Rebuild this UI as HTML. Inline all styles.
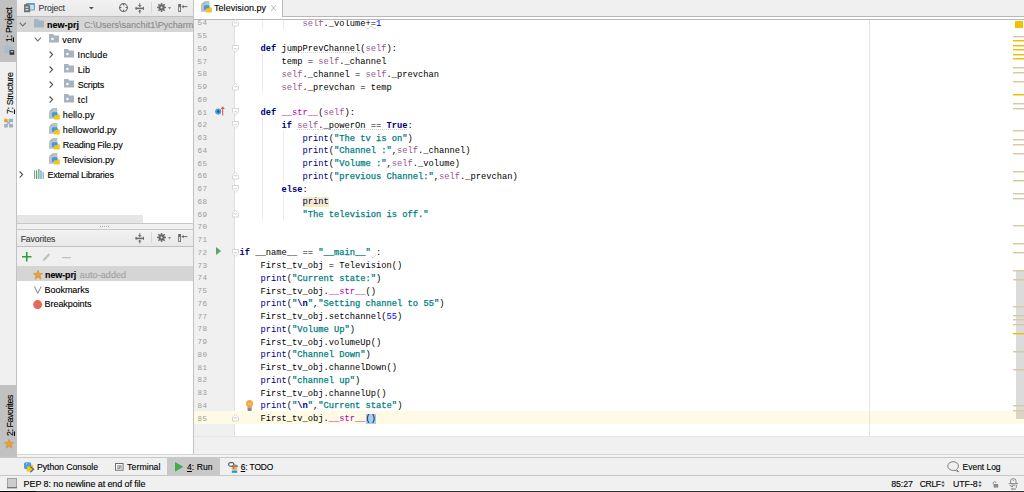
<!DOCTYPE html>
<html><head><meta charset="utf-8">
<style>
*{margin:0;padding:0;box-sizing:border-box}
html,body{width:1024px;height:492px;overflow:hidden;background:#f0f0f0}
body{position:relative;font-family:"Liberation Sans",sans-serif;color:#000}
.a{position:absolute}
.ico{position:absolute;line-height:0}
.ico svg{display:block}
.t2{position:absolute;white-space:pre;color:#000;-webkit-text-stroke:0.12px currentColor}
.ln{position:absolute;left:239.5px;height:13px;line-height:13px;white-space:pre;font-family:"Liberation Mono",monospace;font-size:8.75px;color:#000}
.num{position:absolute;left:197.4px;height:13px;line-height:13px;font-family:"Liberation Mono",monospace;font-size:7.6px;letter-spacing:0.55px;color:#9c9c9c}
.k{color:#000080;font-weight:bold}
.s{color:#94558d}
.t{color:#008080;font-weight:normal;-webkit-text-stroke:0.25px #008080}
.e{color:#000080;font-weight:bold}
.n{color:#0000ff}
.b{color:#000080}
.bw{color:#000080;background:#f6ebbc}
.m{color:#b200b2}
.bm{background:#a3cdf7}
.w{text-decoration:underline dotted #cfcfcf}
.sw{color:#94558d;text-decoration:underline dotted #cfcfcf}
.kw{color:#000080;font-weight:bold;text-decoration:underline dotted #cfcfcf}
.g{text-decoration:underline dotted #b9dcb9;text-underline-offset:0px}
.fold{position:absolute;left:231.5px}
.wv{text-decoration:underline wavy #cdcdcd;text-decoration-thickness:0.5px;text-underline-offset:-0.5px}
.stripe{position:absolute;left:1013px;width:11px;height:1px}
.guide{position:absolute;width:1px;background:#ececec}
u{text-decoration:underline;text-underline-offset:1px}
</style></head><body>
<!-- left tool strip -->
<div class="a" style="left:0;top:0;width:16px;height:457px;background:#f0f0f0"></div>
<div class="a" style="left:0;top:0;width:16px;height:62px;background:#c1c1c1"></div>
<div class="a" style="left:0;top:385px;width:16px;height:72px;background:#c1c1c1"></div>
<div class="a" style="left:16px;top:0;width:1px;height:457px;background:#c2c2c2"></div>
<div class="t2" style="left:2.35px;top:42.00px;font-size:8.8px;line-height:14px;transform-origin:0 0;transform:rotate(-90deg);letter-spacing:-0.276px;"><u>1</u>: Project</div>
<div class="ico" style="left:3.5px;top:45px"><svg width="11" height="10" viewBox="0 0 11 10"><path d="M0.5,0 H4 L4.8,1.4 H8.5 V8 H0.5Z" fill="#a9bccb"/><rect x="5.6" y="5.2" width="4.6" height="4.6" fill="#333"/><rect x="6.6" y="6.2" width="2.6" height="1.1" fill="#ddd"/></svg></div>
<div class="t2" style="left:2.75px;top:113.60px;font-size:8.8px;line-height:14px;transform-origin:0 0;transform:rotate(-90deg);letter-spacing:-0.336px;"><u>7</u>: Structure</div>
<div class="ico" style="left:4px;top:117.5px"><svg width="10" height="10" viewBox="0 0 10 10"><path d="M2,2.6 L7,7.6 M7,2.6 L2,7.6" stroke="#9fb0bf" stroke-width="1.2"/><rect x="4.6" y="0.8" width="4.4" height="3.4" fill="#9fb0bf"/><rect x="0.2" y="5.9" width="3.6" height="3.6" fill="#9fb0bf"/><rect x="5" y="5.9" width="4" height="3.6" fill="#9fb0bf"/><circle cx="1.9" cy="2.5" r="1.9" fill="#eea020"/></svg></div>
<div class="t2" style="left:2.55px;top:435.60px;font-size:8.8px;line-height:14px;transform-origin:0 0;transform:rotate(-90deg);letter-spacing:-0.408px;"><u>2</u>: Favorites</div>
<div class="ico" style="left:3.6px;top:439.3px"><svg width="10" height="10" viewBox="0 0 10 10"><path d="M5,0.2 L6.25,3.3 L9.7,3.5 L7.05,5.7 L7.9,9.2 L5,7.3 L2.1,9.2 L2.95,5.7 L0.3,3.5 L3.75,3.3Z" fill="#eba035" stroke="#d08a2a" stroke-width="0.5"/></svg></div>

<!-- project panel -->
<div class="a" style="left:17px;top:0;width:176px;height:454px;background:#fff"></div>
<div class="a" style="left:17px;top:0;width:176px;height:16px;background:linear-gradient(#f2f2f2,#e8e8e8)"></div>
<div class="a" style="left:17px;top:15.5px;width:176px;height:1px;background:#bfbfbf"></div>
<div class="a" style="left:193px;top:0;width:1px;height:454px;background:#c2c2c2"></div>
<div class="ico" style="left:24px;top:2.7px"><svg width="11" height="10" viewBox="0 0 11 10"><rect x="2.4" y="0.6" width="8" height="6.4" rx="0.4" fill="#c9e3f7" stroke="#5b9fd6" stroke-width="1.1"/><rect x="2.4" y="0.3" width="8.3" height="1.5" fill="#5b9fd6"/><path d="M0,1.2 H4.5 L6.2,2.9 V9.2 H0Z" fill="#717171"/><rect x="1.4" y="3.6" width="3" height="1.1" fill="#e8e8e8"/><rect x="1.4" y="6.2" width="3" height="1.1" fill="#e8e8e8"/></svg></div>
<div class="t2" style="left:38.5px;top:0.92px;font-size:8.6px;line-height:14px;letter-spacing:-0.042px;color:#3c3c3c">Project</div>
<div class="ico" style="left:88.8px;top:7px"><svg width="5" height="3" viewBox="0 0 5 3"><path d="M0,0 H4.7 L2.35,2.4Z" fill="#505050"/></svg></div>
<div class="ico" style="left:119px;top:3px"><svg width="10" height="10" viewBox="0 0 10 10"><circle cx="4.5" cy="4.55" r="3.9" fill="none" stroke="#6b6b6b" stroke-width="1.1"/><path d="M4.5,0.6 V2.4 M4.5,6.7 V8.5 M0.6,4.55 H2.4 M6.6,4.55 H8.4" stroke="#6b6b6b" stroke-width="1.1"/></svg></div>
<div class="ico" style="left:135px;top:2.5px"><svg width="10" height="11" viewBox="0 0 10 11"><g fill="#6b6b6b"><rect x="0.6" y="4.6" width="8.4" height="1.6"/><rect x="0.6" y="3.8" width="1" height="3"/><rect x="8" y="3.8" width="1" height="3"/><rect x="4.3" y="0.1" width="1" height="3.6"/><path d="M2.8,2.2 H6.8 L4.8,3.9Z"/><rect x="4.3" y="7" width="1" height="3.4"/><path d="M2.8,8.6 H6.8 L4.8,6.9Z"/></g></svg></div>
<div class="a" style="left:151px;top:2px;width:1px;height:11px;background:#d9d9d9"></div>
<div class="ico" style="left:157.2px;top:3px"><svg width="10" height="10" viewBox="0 0 10 10"><g fill="#6b6b6b"><circle cx="4.55" cy="4.45" r="3.1"/><rect x="3.85" y="-0.05" width="1.4" height="9" transform="rotate(0 4.55 4.45)"/><rect x="3.85" y="-0.05" width="1.4" height="9" transform="rotate(45 4.55 4.45)"/><rect x="3.85" y="-0.05" width="1.4" height="9" transform="rotate(90 4.55 4.45)"/><rect x="3.85" y="-0.05" width="1.4" height="9" transform="rotate(135 4.55 4.45)"/></g><circle cx="4.55" cy="4.45" r="1.0" fill="#ececec"/></svg></div>
<div class="ico" style="left:168.3px;top:6.8px"><svg width="4" height="3" viewBox="0 0 4 3"><path d="M0,0.3 H3.1 L1.55,2 Z" fill="#6b6b6b"/></svg></div>
<div class="ico" style="left:178px;top:3.9px"><svg width="10" height="9" viewBox="0 0 10 9"><g fill="#6b6b6b"><rect x="0.2" y="0" width="2.8" height="8"/></g><rect x="1.05" y="3.1" width="1.1" height="4.1" fill="#ececec"/><path d="M3.8,2.6 H9.4" stroke="#6b6b6b" stroke-width="1"/><path d="M3.6,2.6 L5.6,0.8 V4.4Z" fill="#6b6b6b"/></svg></div>

<div class="a" style="left:17px;top:16.5px;width:176px;height:15px;background:#d5d5d5"></div>
<div class="ico" style="left:18.6px;top:22.0px"><svg width="8" height="5" viewBox="0 0 8 5"><path d="M0.7,0.7 L3.8,3.9 L6.9,0.7" fill="none" stroke="#707070" stroke-width="1.05"/></svg></div><div class="ico" style="left:34px;top:19.2px"><svg width="10" height="9" viewBox="0 0 10 9"><path d="M0,0 H4.3 L5,1.6 H10 V8.5 H0 Z" fill="#a7b4bf"/></svg></div><div class="t2" style="left:47.1px;top:17.58px;font-size:9px;line-height:14px;"><b>new-prj</b><span style="color:#8a8a8a">  C:\Users\sanchit1\PycharmProjects</span></div><div class="ico" style="left:33.6px;top:37.0px"><svg width="8" height="5" viewBox="0 0 8 5"><path d="M0.7,0.7 L3.8,3.9 L6.9,0.7" fill="none" stroke="#707070" stroke-width="1.05"/></svg></div><div class="ico" style="left:48.9px;top:34.3px"><svg width="10" height="9" viewBox="0 0 10 9"><path d="M0,0 H4.3 L5,1.6 H10 V8.5 H0 Z" fill="#a7b4bf"/><circle cx="3.4" cy="5.0" r="1.35" fill="#f4f6f8"/></svg></div><div class="t2" style="left:62.3px;top:32.58px;font-size:9px;line-height:14px;letter-spacing:0.128px;">venv</div><div class="ico" style="left:49.2px;top:50.9px"><svg width="5" height="8" viewBox="0 0 5 8"><path d="M0.6,0.5 L3.6,3.6 L0.6,6.7" fill="none" stroke="#555" stroke-width="1.15"/></svg></div><div class="ico" style="left:64px;top:49.3px"><svg width="10" height="9" viewBox="0 0 10 9"><path d="M0,0 H4.3 L5,1.6 H10 V8.5 H0 Z" fill="#a7b4bf"/><circle cx="3.4" cy="5.0" r="1.35" fill="#f4f6f8"/></svg></div><div class="t2" style="left:77.6px;top:47.58px;font-size:9px;line-height:14px;letter-spacing:0.128px;">Include</div><div class="ico" style="left:49.2px;top:65.9px"><svg width="5" height="8" viewBox="0 0 5 8"><path d="M0.6,0.5 L3.6,3.6 L0.6,6.7" fill="none" stroke="#555" stroke-width="1.15"/></svg></div><div class="ico" style="left:64px;top:64.3px"><svg width="10" height="9" viewBox="0 0 10 9"><path d="M0,0 H4.3 L5,1.6 H10 V8.5 H0 Z" fill="#a7b4bf"/><circle cx="3.4" cy="5.0" r="1.35" fill="#f4f6f8"/></svg></div><div class="t2" style="left:77.7px;top:62.58px;font-size:9px;line-height:14px;letter-spacing:0.142px;">Lib</div><div class="ico" style="left:49.2px;top:80.9px"><svg width="5" height="8" viewBox="0 0 5 8"><path d="M0.6,0.5 L3.6,3.6 L0.6,6.7" fill="none" stroke="#555" stroke-width="1.15"/></svg></div><div class="ico" style="left:64px;top:79.3px"><svg width="10" height="9" viewBox="0 0 10 9"><path d="M0,0 H4.3 L5,1.6 H10 V8.5 H0 Z" fill="#a7b4bf"/><circle cx="3.4" cy="5.0" r="1.35" fill="#f4f6f8"/></svg></div><div class="t2" style="left:77.7px;top:77.58px;font-size:9px;line-height:14px;letter-spacing:-0.169px;">Scripts</div><div class="ico" style="left:49.2px;top:95.9px"><svg width="5" height="8" viewBox="0 0 5 8"><path d="M0.6,0.5 L3.6,3.6 L0.6,6.7" fill="none" stroke="#555" stroke-width="1.15"/></svg></div><div class="ico" style="left:64px;top:94.3px"><svg width="10" height="9" viewBox="0 0 10 9"><path d="M0,0 H4.3 L5,1.6 H10 V8.5 H0 Z" fill="#a7b4bf"/><circle cx="3.4" cy="5.0" r="1.35" fill="#f4f6f8"/></svg></div><div class="t2" style="left:77.7px;top:92.58px;font-size:9px;line-height:14px;letter-spacing:0.450px;">tcl</div><div class="ico" style="left:49.2px;top:108.0px"><svg width="12" height="12" viewBox="0 0 12 12"><path d="M3.8,0 H8.4 V10.8 H0 V3.8 Z" fill="#b9c1c9"/><path d="M0.6,3.1 L3.1,0.6 V3.1 Z" fill="#a5afb8"/><path d="M4.1,4.3 H7.4 Q8.6,4.3 8.6,5.5 V7.5 H6 Q4.9,7.5 4.9,8.6 V8.9 H4.1 Q2.9,8.9 2.9,7.7 V5.5 Q2.9,4.3 4.1,4.3 Z" fill="#3f9ad8"/><path d="M6,7.5 H8.6 V6.3 H9.6 Q10.8,6.3 10.8,7.5 V10.4 Q10.8,11.6 9.6,11.6 H6 Q4.8,11.6 4.8,10.4 V8.7 Q4.8,7.5 6,7.5 Z" fill="#f6c416"/></svg></div><div class="t2" style="left:62.8px;top:107.58px;font-size:9px;line-height:14px;letter-spacing:0.081px;">hello.py</div><div class="ico" style="left:49.2px;top:123.0px"><svg width="12" height="12" viewBox="0 0 12 12"><path d="M3.8,0 H8.4 V10.8 H0 V3.8 Z" fill="#b9c1c9"/><path d="M0.6,3.1 L3.1,0.6 V3.1 Z" fill="#a5afb8"/><path d="M4.1,4.3 H7.4 Q8.6,4.3 8.6,5.5 V7.5 H6 Q4.9,7.5 4.9,8.6 V8.9 H4.1 Q2.9,8.9 2.9,7.7 V5.5 Q2.9,4.3 4.1,4.3 Z" fill="#3f9ad8"/><path d="M6,7.5 H8.6 V6.3 H9.6 Q10.8,6.3 10.8,7.5 V10.4 Q10.8,11.6 9.6,11.6 H6 Q4.8,11.6 4.8,10.4 V8.7 Q4.8,7.5 6,7.5 Z" fill="#f6c416"/></svg></div><div class="t2" style="left:62.8px;top:122.58px;font-size:9px;line-height:14px;letter-spacing:0.106px;">helloworld.py</div><div class="ico" style="left:49.2px;top:138.0px"><svg width="12" height="12" viewBox="0 0 12 12"><path d="M3.8,0 H8.4 V10.8 H0 V3.8 Z" fill="#b9c1c9"/><path d="M0.6,3.1 L3.1,0.6 V3.1 Z" fill="#a5afb8"/><path d="M4.1,4.3 H7.4 Q8.6,4.3 8.6,5.5 V7.5 H6 Q4.9,7.5 4.9,8.6 V8.9 H4.1 Q2.9,8.9 2.9,7.7 V5.5 Q2.9,4.3 4.1,4.3 Z" fill="#3f9ad8"/><path d="M6,7.5 H8.6 V6.3 H9.6 Q10.8,6.3 10.8,7.5 V10.4 Q10.8,11.6 9.6,11.6 H6 Q4.8,11.6 4.8,10.4 V8.7 Q4.8,7.5 6,7.5 Z" fill="#f6c416"/></svg></div><div class="t2" style="left:62.8px;top:137.58px;font-size:9px;line-height:14px;letter-spacing:-0.189px;">Reading File.py</div><div class="ico" style="left:49.2px;top:153.0px"><svg width="12" height="12" viewBox="0 0 12 12"><path d="M3.8,0 H8.4 V10.8 H0 V3.8 Z" fill="#b9c1c9"/><path d="M0.6,3.1 L3.1,0.6 V3.1 Z" fill="#a5afb8"/><path d="M4.1,4.3 H7.4 Q8.6,4.3 8.6,5.5 V7.5 H6 Q4.9,7.5 4.9,8.6 V8.9 H4.1 Q2.9,8.9 2.9,7.7 V5.5 Q2.9,4.3 4.1,4.3 Z" fill="#3f9ad8"/><path d="M6,7.5 H8.6 V6.3 H9.6 Q10.8,6.3 10.8,7.5 V10.4 Q10.8,11.6 9.6,11.6 H6 Q4.8,11.6 4.8,10.4 V8.7 Q4.8,7.5 6,7.5 Z" fill="#f6c416"/></svg></div><div class="t2" style="left:62.8px;top:152.58px;font-size:9px;line-height:14px;letter-spacing:0.014px;">Television.py</div><div class="ico" style="left:19.4px;top:170.9px"><svg width="5" height="8" viewBox="0 0 5 8"><path d="M0.6,0.5 L3.6,3.6 L0.6,6.7" fill="none" stroke="#555" stroke-width="1.15"/></svg></div><div class="ico" style="left:34.2px;top:168.6px"><svg width="11" height="11" viewBox="0 0 11 11"><rect x="0" y="1.4" width="1.1" height="8.5" fill="#8596a6"/><rect x="2" y="1.4" width="1.2" height="8.6" fill="#4caf3c"/><rect x="4" y="0" width="1.6" height="9.9" fill="#97a3ad"/><rect x="6.4" y="1.4" width="1.2" height="8.6" fill="#35a9e0"/><rect x="8.6" y="3.2" width="1.1" height="6.7" fill="#8596a6"/></svg></div><div class="t2" style="left:47.5px;top:167.58px;font-size:9px;line-height:14px;letter-spacing:-0.214px;">External Libraries</div>

<div class="a" style="left:17px;top:215px;width:126px;height:8px;background:#e5e5e5"></div>
<div class="a" style="left:17px;top:223px;width:176px;height:1px;background:#c8c8c8"></div>
<div class="a" style="left:17px;top:224px;width:176px;height:5px;background:#f0f0f0"></div>
<div class="a" style="left:100px;top:225.5px;width:10px;height:1.5px;background:repeating-linear-gradient(90deg,#aaa 0 1px,transparent 1px 2px)"></div>
<div class="a" style="left:17px;top:229px;width:176px;height:1px;background:#c8c8c8"></div>
<div class="a" style="left:17px;top:230px;width:176px;height:16px;background:linear-gradient(#f2f2f2,#e8e8e8)"></div>
<div class="a" style="left:17px;top:246px;width:176px;height:1px;background:#bfbfbf"></div>
<div class="t2" style="left:20.7px;top:231.62px;font-size:8.6px;line-height:14px;letter-spacing:-0.080px;color:#3c3c3c">Favorites</div>
<div class="ico" style="left:135px;top:232.7px"><svg width="10" height="11" viewBox="0 0 10 11"><g fill="#6b6b6b"><rect x="0.6" y="4.6" width="8.4" height="1.6"/><rect x="0.6" y="3.8" width="1" height="3"/><rect x="8" y="3.8" width="1" height="3"/><rect x="4.3" y="0.1" width="1" height="3.6"/><path d="M2.8,2.2 H6.8 L4.8,3.9Z"/><rect x="4.3" y="7" width="1" height="3.4"/><path d="M2.8,8.6 H6.8 L4.8,6.9Z"/></g></svg></div>
<div class="a" style="left:151px;top:232px;width:1px;height:11px;background:#d9d9d9"></div>
<div class="ico" style="left:157.2px;top:233px"><svg width="10" height="10" viewBox="0 0 10 10"><g fill="#6b6b6b"><circle cx="4.55" cy="4.45" r="3.1"/><rect x="3.85" y="-0.05" width="1.4" height="9" transform="rotate(0 4.55 4.45)"/><rect x="3.85" y="-0.05" width="1.4" height="9" transform="rotate(45 4.55 4.45)"/><rect x="3.85" y="-0.05" width="1.4" height="9" transform="rotate(90 4.55 4.45)"/><rect x="3.85" y="-0.05" width="1.4" height="9" transform="rotate(135 4.55 4.45)"/></g><circle cx="4.55" cy="4.45" r="1.0" fill="#ececec"/></svg></div>
<div class="ico" style="left:168.3px;top:236.8px"><svg width="4" height="3" viewBox="0 0 4 3"><path d="M0,0.3 H3.1 L1.55,2 Z" fill="#6b6b6b"/></svg></div>
<div class="ico" style="left:178px;top:233.9px"><svg width="10" height="9" viewBox="0 0 10 9"><g fill="#6b6b6b"><rect x="0.2" y="0" width="2.8" height="8"/></g><rect x="1.05" y="3.1" width="1.1" height="4.1" fill="#ececec"/><path d="M3.8,2.6 H9.4" stroke="#6b6b6b" stroke-width="1"/><path d="M3.6,2.6 L5.6,0.8 V4.4Z" fill="#6b6b6b"/></svg></div>
<div class="a" style="left:17px;top:247px;width:176px;height:19px;background:#f0f0f0"></div>
<div class="ico" style="left:21.6px;top:252px"><svg width="10" height="10" viewBox="0 0 10 10"><path d="M4.75,0 V9.5 M0,4.75 H9.5" stroke="#2f9e3f" stroke-width="1.6"/></svg></div>
<div class="ico" style="left:41.5px;top:252px"><svg width="9" height="10" viewBox="0 0 9 10"><path d="M0.8,9.2 L1.6,6.6 L6.6,1.2 L8.2,2.8 L3.2,8.2Z" fill="#c2c2c2"/></svg></div>
<div class="ico" style="left:62px;top:257.2px"><svg width="9" height="2" viewBox="0 0 9 2"><rect x="0" y="0" width="9" height="1.3" fill="#c2c2c2"/></svg></div>
<div class="a" style="left:17px;top:266px;width:176px;height:15.3px;background:#d5d5d5"></div>
<div class="ico" style="left:33.2px;top:270.4px"><svg width="10" height="10" viewBox="0 0 10 10"><path d="M5,0.2 L6.25,3.3 L9.7,3.5 L7.05,5.7 L7.9,9.2 L5,7.3 L2.1,9.2 L2.95,5.7 L0.3,3.5 L3.75,3.3Z" fill="#eba035" stroke="#d08a2a" stroke-width="0.5"/></svg></div>
<div class="t2" style="left:45.1px;top:267.68px;font-size:9px;line-height:14px;font-weight:bold;letter-spacing:-0.136px;">new-prj</div><div class="t2" style="left:79.8px;top:267.68px;font-size:9px;line-height:14px;letter-spacing:0.084px;color:#a2a2a2">auto-added</div>
<div class="ico" style="left:34px;top:285.8px"><svg width="8" height="8" viewBox="0 0 8 8"><path d="M0.5,0.4 L3.8,7.2 L7.2,0.4" fill="none" stroke="#8a969e" stroke-width="1.05"/></svg></div>
<div class="t2" style="left:44.6px;top:282.58px;font-size:9px;line-height:14px;letter-spacing:-0.052px;">Bookmarks</div>
<div class="ico" style="left:32.8px;top:300px"><svg width="10" height="10" viewBox="0 0 10 10"><circle cx="4.65" cy="4.6" r="4.5" fill="#e6695d"/></svg></div>
<div class="t2" style="left:44.6px;top:297.18px;font-size:9px;line-height:14px;letter-spacing:-0.063px;">Breakpoints</div>
<div class="a" style="left:17px;top:454px;width:177px;height:3px;background:#f3f3f3"></div>
<div class="a" style="left:17px;top:454px;width:177px;height:1px;background:#d6d6d6"></div>

<!-- editor -->
<div class="a" style="left:194px;top:0;width:830px;height:20px;background:#fff"></div>
<div class="a" style="left:283px;top:0;width:741px;height:16px;background:#f0f0f0"></div>
<div class="a" style="left:282px;top:0;width:1px;height:17px;background:#b8b8b8"></div>
<div class="a" style="left:282px;top:16px;width:742px;height:1px;background:#b8b8b8"></div>
<div class="a" style="left:194px;top:19px;width:830px;height:1px;background:#b8b8b8"></div>
<div class="ico" style="left:201.1px;top:1.1px"><svg width="12" height="12" viewBox="0 0 12 12"><path d="M3.8,0 H8.4 V10.8 H0 V3.8 Z" fill="#b9c1c9"/><path d="M0.6,3.1 L3.1,0.6 V3.1 Z" fill="#a5afb8"/><path d="M4.1,4.3 H7.4 Q8.6,4.3 8.6,5.5 V7.5 H6 Q4.9,7.5 4.9,8.6 V8.9 H4.1 Q2.9,8.9 2.9,7.7 V5.5 Q2.9,4.3 4.1,4.3 Z" fill="#3f9ad8"/><path d="M6,7.5 H8.6 V6.3 H9.6 Q10.8,6.3 10.8,7.5 V10.4 Q10.8,11.6 9.6,11.6 H6 Q4.8,11.6 4.8,10.4 V8.7 Q4.8,7.5 6,7.5 Z" fill="#f6c416"/></svg></div>
<div class="t2" style="left:214px;top:0.78px;font-size:9px;line-height:14px;letter-spacing:0.047px;">Television.py</div>
<div class="ico" style="left:271px;top:5.2px"><svg width="5" height="6" viewBox="0 0 5 6"><path d="M0.3,0.3 L4.7,5.7 M4.7,0.3 L0.3,5.7" stroke="#b0b0b0" stroke-width="0.95"/></svg></div>

<div class="a" style="left:194px;top:20px;width:830px;height:416px;background:#fff"></div>
<div class="a" style="left:194px;top:20px;width:40px;height:416px;background:#f0f0f0"></div>
<div class="a" style="left:234px;top:20px;width:1px;height:416px;background:#e0e0e0"></div>
<div class="a" style="left:194px;top:411.15px;width:830px;height:12.75px;background:#fffae3"></div>
<div class="a" style="left:869px;top:20px;width:1px;height:416px;background:#e4e4e4"></div>
<div class="a" style="left:194px;top:20px;width:830px;height:416px;overflow:hidden">
<div style="position:absolute;left:-194px;top:-20px;width:1024px;height:492px">
<div class="guide" style="left:262.30px;top:54.15px;height:38.25px"></div><div class="guide" style="left:262.30px;top:117.90px;height:102.00px"></div><div class="guide" style="left:283.30px;top:130.65px;height:51.00px"></div><div class="guide" style="left:283.30px;top:194.40px;height:25.50px"></div><div class="guide" style="left:262.30px;top:20px;height:8.65px"></div><div class="guide" style="left:283.30px;top:20px;height:8.65px"></div>
<div class="num" style="top:17.37px">54</div><div class="num" style="top:30.12px">55</div><div class="num" style="top:42.87px">56</div><div class="num" style="top:55.62px">57</div><div class="num" style="top:68.37px">58</div><div class="num" style="top:81.12px">59</div><div class="num" style="top:93.87px">60</div><div class="num" style="top:106.62px">61</div><div class="num" style="top:119.37px">62</div><div class="num" style="top:132.12px">63</div><div class="num" style="top:144.87px">64</div><div class="num" style="top:157.62px">65</div><div class="num" style="top:170.37px">66</div><div class="num" style="top:183.12px">67</div><div class="num" style="top:195.87px">68</div><div class="num" style="top:208.62px">69</div><div class="num" style="top:221.37px">70</div><div class="num" style="top:234.12px">71</div><div class="num" style="top:246.87px">72</div><div class="num" style="top:259.62px">73</div><div class="num" style="top:272.37px">74</div><div class="num" style="top:285.12px">75</div><div class="num" style="top:297.87px">76</div><div class="num" style="top:310.62px">77</div><div class="num" style="top:323.37px">78</div><div class="num" style="top:336.12px">79</div><div class="num" style="top:348.87px">80</div><div class="num" style="top:361.62px">81</div><div class="num" style="top:374.37px">82</div><div class="num" style="top:387.12px">83</div><div class="num" style="top:399.87px">84</div><div class="num" style="top:412.62px">85</div>
<div class="ln" style="top:17.77px">            <span class="s">self</span>._volume<span class="wv">+=</span><span class="n">1</span></div><div class="ln" style="top:30.52px"></div><div class="ln" style="top:43.27px">    <span class="k">def</span> <span class="w">jumpPrevChannel</span>(<span class="s">self</span>):</div><div class="ln" style="top:56.02px">        temp = <span class="s">self</span>._channel</div><div class="ln" style="top:68.77px">        <span class="s">self</span>._channel = <span class="s">self</span>._prevchan</div><div class="ln" style="top:81.52px">        <span class="s">self</span>._<span class="g">prevchan</span> = temp</div><div class="ln" style="top:94.27px"></div><div class="ln" style="top:107.02px">    <span class="k">def</span> <span class="m">__str__</span>(<span class="s">self</span>):</div><div class="ln" style="top:119.77px">        <span class="k">if</span> <span class="sw">self</span><span class="w">._powerOn == </span><span class="kw">True</span>:</div><div class="ln" style="top:132.52px">            <span class="b">print</span>(<span class="t">&quot;The tv is on&quot;</span>)</div><div class="ln" style="top:145.27px">            <span class="b">print</span>(<span class="t">&quot;Channel :&quot;</span><span class="wv">,</span><span class="s">self</span>._channel)</div><div class="ln" style="top:158.02px">            <span class="b">print</span>(<span class="t">&quot;Volume :&quot;</span><span class="wv">,</span><span class="s">self</span>._volume)</div><div class="ln" style="top:170.77px">            <span class="b">print</span>(<span class="t">&quot;previous Channel:&quot;</span><span class="wv">,</span><span class="s">self</span>._prevchan)</div><div class="ln" style="top:183.52px">        <span class="k">else</span>:</div><div class="ln" style="top:196.27px">            <span class="bw">print</span></div><div class="ln" style="top:209.02px">            <span class="t">&quot;The television is off.&quot;</span></div><div class="ln" style="top:221.77px"></div><div class="ln" style="top:234.52px"></div><div class="ln" style="top:247.27px"><span class="k">if</span> __name__ == <span class="t">&quot;__main__&quot;</span><span class="wv"> </span>:</div><div class="ln" style="top:260.02px">    First_tv_obj = Television()</div><div class="ln" style="top:272.77px">    <span class="b">print</span>(<span class="t">&quot;Current state:&quot;</span>)</div><div class="ln" style="top:285.52px">    First_tv_obj.<span class="m">__str__</span>()</div><div class="ln" style="top:298.27px">    <span class="b">print</span>(<span class="t">&quot;</span><span class="e">\n</span><span class="t">&quot;</span><span class="wv">,</span><span class="t">&quot;Setting channel to 55&quot;</span>)</div><div class="ln" style="top:311.02px">    First_tv_obj.setchannel(<span class="n">55</span>)</div><div class="ln" style="top:323.77px">    <span class="b">print</span>(<span class="t">&quot;Volume Up&quot;</span>)</div><div class="ln" style="top:336.52px">    First_tv_obj.volumeUp()</div><div class="ln" style="top:349.27px">    <span class="b">print</span>(<span class="t">&quot;Channel Down&quot;</span>)</div><div class="ln" style="top:362.02px">    First_tv_obj.channelDown()</div><div class="ln" style="top:374.77px">    <span class="b">print</span>(<span class="t">&quot;channel up&quot;</span>)</div><div class="ln" style="top:387.52px">    First_tv_obj.channelUp()</div><div class="ln" style="top:400.27px">    <span class="b">print</span>(<span class="t">&quot;</span><span class="e">\n</span><span class="t">&quot;</span><span class="wv">,</span><span class="t">&quot;Current state&quot;</span>)</div><div class="ln" style="top:413.02px">    First_tv_obj.<span class="m">__str__</span><span class="bm">()</span></div>
</div></div>
<svg class="fold" style="top:19.00px" width="7" height="8" viewBox="0 0 7 8"><path d="M0.5,7 H6.5 V3.2 L3.5,0.3 L0.5,3.2 Z" fill="#fff" stroke="#cdcdcd" stroke-width="0.8"/><path d="M1.8,3.8 H5.2" stroke="#bdbdbd" stroke-width="0.8"/></svg><svg class="fold" style="top:44.70px" width="7" height="8" viewBox="0 0 7 8"><path d="M0.5,0.5 H6.5 V4.3 L3.5,7.2 L0.5,4.3 Z" fill="#fff" stroke="#cdcdcd" stroke-width="0.8"/><path d="M1.8,3.8 H5.2" stroke="#bdbdbd" stroke-width="0.8"/></svg><svg class="fold" style="top:82.75px" width="7" height="8" viewBox="0 0 7 8"><path d="M0.5,7 H6.5 V3.2 L3.5,0.3 L0.5,3.2 Z" fill="#fff" stroke="#cdcdcd" stroke-width="0.8"/><path d="M1.8,3.8 H5.2" stroke="#bdbdbd" stroke-width="0.8"/></svg><svg class="fold" style="top:108.45px" width="7" height="8" viewBox="0 0 7 8"><path d="M0.5,0.5 H6.5 V4.3 L3.5,7.2 L0.5,4.3 Z" fill="#fff" stroke="#cdcdcd" stroke-width="0.8"/><path d="M1.8,3.8 H5.2" stroke="#bdbdbd" stroke-width="0.8"/></svg><svg class="fold" style="top:121.20px" width="7" height="8" viewBox="0 0 7 8"><path d="M0.5,0.5 H6.5 V4.3 L3.5,7.2 L0.5,4.3 Z" fill="#fff" stroke="#cdcdcd" stroke-width="0.8"/><path d="M1.8,3.8 H5.2" stroke="#bdbdbd" stroke-width="0.8"/></svg><svg class="fold" style="top:172.00px" width="7" height="8" viewBox="0 0 7 8"><path d="M0.5,7 H6.5 V3.2 L3.5,0.3 L0.5,3.2 Z" fill="#fff" stroke="#cdcdcd" stroke-width="0.8"/><path d="M1.8,3.8 H5.2" stroke="#bdbdbd" stroke-width="0.8"/></svg><svg class="fold" style="top:184.95px" width="7" height="8" viewBox="0 0 7 8"><path d="M0.5,0.5 H6.5 V4.3 L3.5,7.2 L0.5,4.3 Z" fill="#fff" stroke="#cdcdcd" stroke-width="0.8"/><path d="M1.8,3.8 H5.2" stroke="#bdbdbd" stroke-width="0.8"/></svg><svg class="fold" style="top:210.25px" width="7" height="8" viewBox="0 0 7 8"><path d="M0.5,7 H6.5 V3.2 L3.5,0.3 L0.5,3.2 Z" fill="#fff" stroke="#cdcdcd" stroke-width="0.8"/><path d="M1.8,3.8 H5.2" stroke="#bdbdbd" stroke-width="0.8"/></svg><svg class="fold" style="top:248.70px" width="7" height="8" viewBox="0 0 7 8"><path d="M0.5,0.5 H6.5 V4.3 L3.5,7.2 L0.5,4.3 Z" fill="#fff" stroke="#cdcdcd" stroke-width="0.8"/><path d="M1.8,3.8 H5.2" stroke="#bdbdbd" stroke-width="0.8"/></svg><svg class="fold" style="top:414.25px" width="7" height="8" viewBox="0 0 7 8"><path d="M0.5,7 H6.5 V3.2 L3.5,0.3 L0.5,3.2 Z" fill="#fff" stroke="#cdcdcd" stroke-width="0.8"/><path d="M1.8,3.8 H5.2" stroke="#bdbdbd" stroke-width="0.8"/></svg>
<div class="ico" style="left:214.8px;top:106.2px"><svg width="10" height="10" viewBox="0 0 10 10"><circle cx="3.2" cy="5.6" r="3.05" fill="#4a9fd8"/><circle cx="3.2" cy="5.6" r="1.25" fill="#33536e"/><path d="M7.7,9.6 V2.2" stroke="#d8584c" stroke-width="1.05"/><path d="M5.6,3.1 L7.7,0.2 L9.8,3.1Z" fill="#d8584c"/></svg></div>
<div class="ico" style="left:215.9px;top:247.1px"><svg width="6" height="8" viewBox="0 0 6 8"><path d="M0,0 L5.1,3.95 L0,7.9Z" fill="#5aa66a"/></svg></div>
<div class="ico" style="left:246px;top:399.9px"><svg width="8" height="11" viewBox="0 0 8 11"><circle cx="3.6" cy="3.6" r="3.5" fill="#f3a83b"/><path d="M1.3,5.6 H5.9 V7.4 H1.3Z" fill="#f3a83b"/><rect x="1.6" y="7.5" width="4" height="3.4" fill="#7e7e7e"/><rect x="1.6" y="8.6" width="4" height="0.6" fill="#b0b0b0"/><path d="M2.1,3.2 L2.9,4.6 L3.6,3.6 L4.3,4.6 L5.1,3.2" fill="none" stroke="#fbe0b4" stroke-width="0.55"/></svg></div>

<div class="a" style="left:1015px;top:21px;width:7.5px;height:7.2px;background:#ecc300"></div>
<div class="a" style="left:1016px;top:270.6px;width:8px;height:148px;background:rgba(0,0,0,0.14)"></div>
<div class="stripe" style="top:36px;background:#d6c9a3"></div><div class="stripe" style="top:37px;background:#d6c9a3;opacity:0.45"></div><div class="stripe" style="top:67px;background:#d6c9a3"></div><div class="stripe" style="top:68px;background:#d6c9a3;opacity:0.45"></div><div class="stripe" style="top:72px;background:#d6c9a3"></div><div class="stripe" style="top:73px;background:#d6c9a3;opacity:0.45"></div><div class="stripe" style="top:81px;background:#d6c9a3"></div><div class="stripe" style="top:82px;background:#d6c9a3;opacity:0.45"></div><div class="stripe" style="top:103px;background:#d6c9a3"></div><div class="stripe" style="top:104px;background:#d6c9a3;opacity:0.45"></div><div class="stripe" style="top:108px;background:#d6c9a3"></div><div class="stripe" style="top:109px;background:#d6c9a3;opacity:0.45"></div><div class="stripe" style="top:130px;background:#d6c9a3"></div><div class="stripe" style="top:131px;background:#d6c9a3;opacity:0.45"></div><div class="stripe" style="top:139px;background:#d6c9a3"></div><div class="stripe" style="top:140px;background:#d6c9a3;opacity:0.45"></div><div class="stripe" style="top:144px;background:#d6c9a3"></div><div class="stripe" style="top:145px;background:#d6c9a3;opacity:0.45"></div><div class="stripe" style="top:153px;background:#d6c9a3"></div><div class="stripe" style="top:154px;background:#d6c9a3;opacity:0.45"></div><div class="stripe" style="top:171px;background:#d6c9a3"></div><div class="stripe" style="top:172px;background:#d6c9a3;opacity:0.45"></div><div class="stripe" style="top:180px;background:#d6c9a3"></div><div class="stripe" style="top:181px;background:#d6c9a3;opacity:0.45"></div><div class="stripe" style="top:193px;background:#d6c9a3"></div><div class="stripe" style="top:194px;background:#d6c9a3;opacity:0.45"></div><div class="stripe" style="top:198px;background:#d6c9a3"></div><div class="stripe" style="top:199px;background:#d6c9a3;opacity:0.45"></div><div class="stripe" style="top:225px;background:#d6c9a3"></div><div class="stripe" style="top:226px;background:#d6c9a3;opacity:0.45"></div><div class="stripe" style="top:243px;background:#d6c9a3"></div><div class="stripe" style="top:244px;background:#d6c9a3;opacity:0.45"></div><div class="stripe" style="top:252px;background:#d6c9a3"></div><div class="stripe" style="top:253px;background:#d6c9a3;opacity:0.45"></div><div class="stripe" style="top:270px;background:#d6c9a3"></div><div class="stripe" style="top:271px;background:#d6c9a3;opacity:0.45"></div><div class="stripe" style="top:279px;background:#d6c9a3"></div><div class="stripe" style="top:280px;background:#d6c9a3;opacity:0.45"></div><div class="stripe" style="top:306px;background:#d6c9a3"></div><div class="stripe" style="top:307px;background:#d6c9a3;opacity:0.45"></div><div class="stripe" style="top:315px;background:#d6c9a3"></div><div class="stripe" style="top:316px;background:#d6c9a3;opacity:0.45"></div><div class="stripe" style="top:319px;background:#d6c9a3"></div><div class="stripe" style="top:320px;background:#d6c9a3;opacity:0.45"></div><div class="stripe" style="top:324px;background:#d6c9a3"></div><div class="stripe" style="top:325px;background:#d6c9a3;opacity:0.45"></div><div class="stripe" style="top:351px;background:#d6c9a3"></div><div class="stripe" style="top:352px;background:#d6c9a3;opacity:0.45"></div><div class="stripe" style="top:369px;background:#d6c9a3"></div><div class="stripe" style="top:370px;background:#d6c9a3;opacity:0.45"></div><div class="stripe" style="top:405px;background:#d6c9a3"></div><div class="stripe" style="top:406px;background:#d6c9a3;opacity:0.45"></div><div class="stripe" style="top:410px;background:#d6c9a3"></div><div class="stripe" style="top:411px;background:#d6c9a3;opacity:0.45"></div><div class="stripe" style="top:40px;background:#ebc000"></div><div class="stripe" style="top:41px;background:#ebc000;opacity:0.45"></div><div class="stripe" style="top:45px;background:#ebc000"></div><div class="stripe" style="top:46px;background:#ebc000;opacity:0.45"></div><div class="stripe" style="top:49px;background:#ebc000"></div><div class="stripe" style="top:50px;background:#ebc000;opacity:0.45"></div><div class="stripe" style="top:54px;background:#ebc000"></div><div class="stripe" style="top:55px;background:#ebc000;opacity:0.45"></div><div class="stripe" style="top:58px;background:#ebc000"></div><div class="stripe" style="top:59px;background:#ebc000;opacity:0.45"></div><div class="stripe" style="top:94px;background:#ebc000"></div><div class="stripe" style="top:95px;background:#ebc000;opacity:0.45"></div><div class="stripe" style="top:333px;background:#ebc000"></div><div class="stripe" style="top:334px;background:#ebc000;opacity:0.45"></div>

<div class="a" style="left:194px;top:436px;width:830px;height:18px;background:#f0f0f0"></div>
<div class="a" style="left:194px;top:435.5px;width:830px;height:1px;background:#e6e6e6"></div>
<div class="a" style="left:194px;top:454px;width:830px;height:1px;background:#d6d6d6"></div>
<div class="a" style="left:194px;top:455px;width:830px;height:2px;background:#f3f3f3"></div>

<!-- bottom tool bar -->
<div class="a" style="left:0;top:457px;width:1024px;height:1px;background:#c8c8c8"></div>
<div class="a" style="left:0;top:458px;width:1024px;height:17px;background:#f0f0f0"></div>
<div class="a" style="left:167px;top:458px;width:52.5px;height:17px;background:#c8c8c8"></div>
<div class="a" style="left:0;top:474.8px;width:1024px;height:1px;background:#c8c8c8"></div>
<div class="ico" style="left:23.9px;top:461.6px"><svg width="11" height="11" viewBox="0 0 11 11"><path d="M4.6,2.6 H7.6 Q9.1,2.6 9.1,4.1 V7.9 Q9.1,9.4 7.6,9.4 H3.8 Q2.3,9.4 2.3,7.9 V4.6 H4.6 Z" fill="#f7c614"/><path d="M1.5,0.3 H5.6 Q7.1,0.3 7.1,1.8 V4.6 H3.3 V7.1 H1.5 Q0,7.1 0,5.6 V1.8 Q0,0.3 1.5,0.3 Z" fill="#4aa0dc"/><circle cx="2.5" cy="1.7" r="0.55" fill="#dcefff"/><path d="M6.2,4.4 L9.6,7.3 L6.2,10.2" fill="none" stroke="#5b6b7c" stroke-width="1.3"/></svg></div>
<div class="t2" style="left:36.9px;top:460.19px;font-size:8.7px;line-height:14px;letter-spacing:-0.011px;">Python Console</div>
<div class="ico" style="left:115.2px;top:463px"><svg width="9" height="8" viewBox="0 0 9 8"><rect x="0.5" y="0.5" width="7.6" height="6.7" fill="#fbfbfb" stroke="#6f6f6f" stroke-width="1"/><rect x="2.2" y="2.2" width="4.4" height="3.8" fill="#9a9a9a"/><rect x="3" y="2.9" width="0.8" height="2" fill="#d0d0d0"/><circle cx="5.6" cy="5.2" r="0.6" fill="#e8e8e8"/></svg></div>
<div class="t2" style="left:127.1px;top:460.15px;font-size:8.8px;line-height:14px;letter-spacing:0.021px;">Terminal</div>
<div class="ico" style="left:175px;top:462px"><svg width="9" height="10" viewBox="0 0 9 10"><path d="M0,0 L8.4,4.85 L0,9.7Z" fill="#3daf4b"/></svg></div>
<div class="t2" style="left:187px;top:460.22px;font-size:8.6px;line-height:14px;letter-spacing:0.054px;"><u>4</u>: Run</div>
<div class="ico" style="left:227.6px;top:461.6px"><svg width="11" height="11" viewBox="0 0 11 11"><rect x="0.6" y="0.6" width="5.2" height="3.6" rx="1.6" fill="#fff" stroke="#5a5a5a" stroke-width="1.1"/><path d="M3.4,4.8 Q3.4,2.4 6.8,2.4 Q9.6,2.4 9.6,5 Z" fill="#707070"/><circle cx="6.5" cy="5.8" r="2.9" fill="#f2b468"/><rect x="3.5" y="3.6" width="6.2" height="1.2" fill="#707070"/><circle cx="5.7" cy="5.9" r="0.55" fill="#333"/><rect x="3.8" y="8.6" width="5.4" height="2.2" fill="#2f8fd8"/></svg></div>
<div class="t2" style="left:240.7px;top:460.79px;font-size:8.4px;line-height:13px;letter-spacing:-0.103px;"><u>6</u>: TODO</div>
<div class="ico" style="left:947px;top:461px"><svg width="13" height="12" viewBox="0 0 13 12"><path d="M6.1,0.7 C9,0.7 11.4,2.6 11.4,5 C11.4,6.4 10.7,7.6 9.6,8.4 L11.6,10.8 L8,9.3 C7.4,9.4 6.8,9.4 6.1,9.4 C3.2,9.4 0.8,7.4 0.8,5 C0.8,2.6 3.2,0.7 6.1,0.7Z" fill="none" stroke="#7b7b7b" stroke-width="0.95"/></svg></div>
<div class="t2" style="left:962.6px;top:460.15px;font-size:8.5px;line-height:14px;letter-spacing:-0.035px;">Event Log</div>

<!-- status bar -->
<div class="a" style="left:0;top:476px;width:1024px;height:14px;background:#f0f0f0"></div>
<div class="ico" style="left:7px;top:478.2px"><svg width="10" height="11" viewBox="0 0 10 11"><rect x="0.5" y="0.5" width="9" height="9" fill="#cdcdcd" stroke="#a0a0a0" stroke-width="1"/><rect x="0" y="9.4" width="10" height="0.9" fill="#5a5a5a"/></svg></div>
<div class="t2" style="left:23.6px;top:476.78px;font-size:9px;line-height:14px;letter-spacing:-0.097px;">PEP 8: no newline at end of file</div>
<div class="t2" style="left:891.3px;top:476.85px;font-size:8.8px;line-height:14px;letter-spacing:-0.104px;">85:27</div>
<div class="t2" style="left:919.8px;top:476.92px;font-size:8.6px;line-height:14px;letter-spacing:-0.384px;">CRLF</div>
<div class="ico" style="left:941px;top:479.6px"><svg width="4" height="8" viewBox="0 0 4 8"><path d="M0.2,3.2 L2,0.8 L3.8,3.2Z M0.2,4.8 L2,7.2 L3.8,4.8Z" fill="#5a5a5a"/></svg></div>
<div class="t2" style="left:953px;top:476.85px;font-size:8.8px;line-height:14px;letter-spacing:-0.055px;">UTF-8</div>
<div class="ico" style="left:977.8px;top:479.6px"><svg width="4" height="8" viewBox="0 0 4 8"><path d="M0.2,3.2 L2,0.8 L3.8,3.2Z M0.2,4.8 L2,7.2 L3.8,4.8Z" fill="#5a5a5a"/></svg></div>
<div class="ico" style="left:992.4px;top:481px"><svg width="7" height="7" viewBox="0 0 7 7"><path d="M1.2,3.2 V2 A1.4,1.4 0 0 1 4,2" fill="none" stroke="#8a8a8a" stroke-width="0.9"/><rect x="1.6" y="3" width="4.6" height="3.6" fill="#8a8a8a"/></svg></div>
<div class="ico" style="left:1008px;top:477.6px"><svg width="11" height="12" viewBox="0 0 11 12"><g fill="none" stroke="#6a6a6a" stroke-width="0.8"><path d="M2.6,5 V2.8 Q2.6,0.7 5.3,0.7 Q8,0.7 8,2.8 V5"/><path d="M0.6,5.6 H10"/><path d="M1.8,7 Q3.2,9.6 5.2,8.6 M3.4,7.2 H7.2 M8.3,6.8 V9.8"/><path d="M3,11 H7.8" stroke-width="1"/></g><circle cx="5.3" cy="2.6" r="0.5" fill="#6a6a6a"/></svg></div>
<div class="a" style="left:0;top:490px;width:1024px;height:1px;background:#fafafa"></div>
<div class="a" style="left:0;top:491px;width:1024px;height:1px;background:#2e2e2e"></div>
<div class="a" style="left:0;top:491px;width:36px;height:1px;background:#050505"></div>
</body></html>
